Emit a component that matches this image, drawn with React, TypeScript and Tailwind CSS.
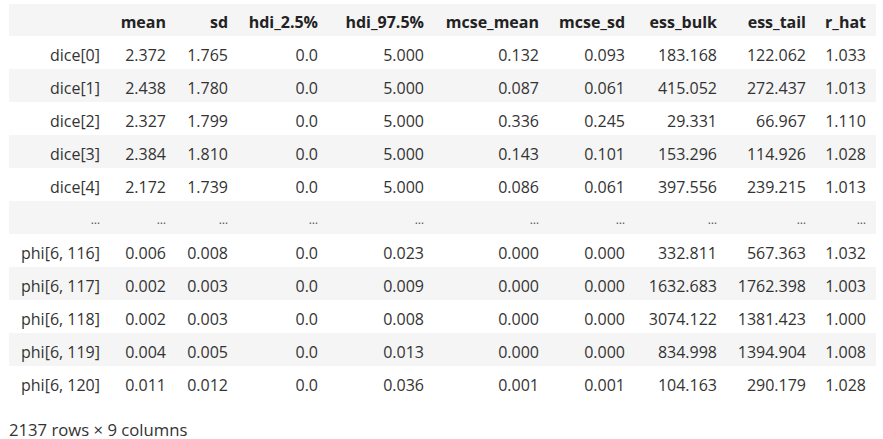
const columns = ['mean', 'sd', 'hdi_2.5%', 'hdi_97.5%', 'mcse_mean', 'mcse_sd', 'ess_bulk', 'ess_tail', 'r_hat'];

const widths = [101, 66, 62, 90, 106, 115, 86, 92, 89, 60];

const rows: string[][] = [
  ['dice[0]', '2.372', '1.765', '0.0', '5.000', '0.132', '0.093', '183.168', '122.062', '1.033'],
  ['dice[1]', '2.438', '1.780', '0.0', '5.000', '0.087', '0.061', '415.052', '272.437', '1.013'],
  ['dice[2]', '2.327', '1.799', '0.0', '5.000', '0.336', '0.245', '29.331', '66.967', '1.110'],
  ['dice[3]', '2.384', '1.810', '0.0', '5.000', '0.143', '0.101', '153.296', '114.926', '1.028'],
  ['dice[4]', '2.172', '1.739', '0.0', '5.000', '0.086', '0.061', '397.556', '239.215', '1.013'],
  ['...', '...', '...', '...', '...', '...', '...', '...', '...', '...'],
  ['phi[6, 116]', '0.006', '0.008', '0.0', '0.023', '0.000', '0.000', '332.811', '567.363', '1.032'],
  ['phi[6, 117]', '0.002', '0.003', '0.0', '0.009', '0.000', '0.000', '1632.683', '1762.398', '1.003'],
  ['phi[6, 118]', '0.002', '0.003', '0.0', '0.008', '0.000', '0.000', '3074.122', '1381.423', '1.000'],
  ['phi[6, 119]', '0.004', '0.005', '0.0', '0.013', '0.000', '0.000', '834.998', '1394.904', '1.008'],
  ['phi[6, 120]', '0.011', '0.012', '0.0', '0.036', '0.001', '0.001', '104.163', '290.179', '1.028'],
];

export default function App() {
  return (
    <div className="min-h-screen bg-white pl-[9px] pt-[4px] text-[16px] text-[#333] [font-family:'Open_Sans',sans-serif]">
      <table className="table-fixed border-collapse w-[867px]">
        <colgroup>
          {widths.map((w, i) => (
            <col key={i} style={{ width: w }} />
          ))}
        </colgroup>
        <thead>
          <tr className="h-[32px] bg-[#f5f5f5]">
            <th />
            {columns.map((c) => (
              <th key={c} className="pr-[10px] pt-[4px] text-right font-bold text-[#222] whitespace-nowrap">
                {c}
              </th>
            ))}
          </tr>
        </thead>
        <tbody>
          {rows.map((r, i) => (
            <tr key={i} className={`h-[33px] ${i % 2 === 1 ? 'bg-[#f5f5f5]' : 'bg-white'}`}>
              {r.map((v, j) => (
                <td
                  key={j}
                  className={`pr-[10px] pt-[5px] text-right whitespace-nowrap ${v === '...' ? 'text-[12px] text-[#555]' : ''}`}
                >
                  {v === '...' ? '…' : v}
                </td>
              ))}
            </tr>
          ))}
        </tbody>
      </table>
      <p className="mt-[23px] text-[16.7px] leading-[16px]">2137 rows × 9 columns</p>
    </div>
  );
}
